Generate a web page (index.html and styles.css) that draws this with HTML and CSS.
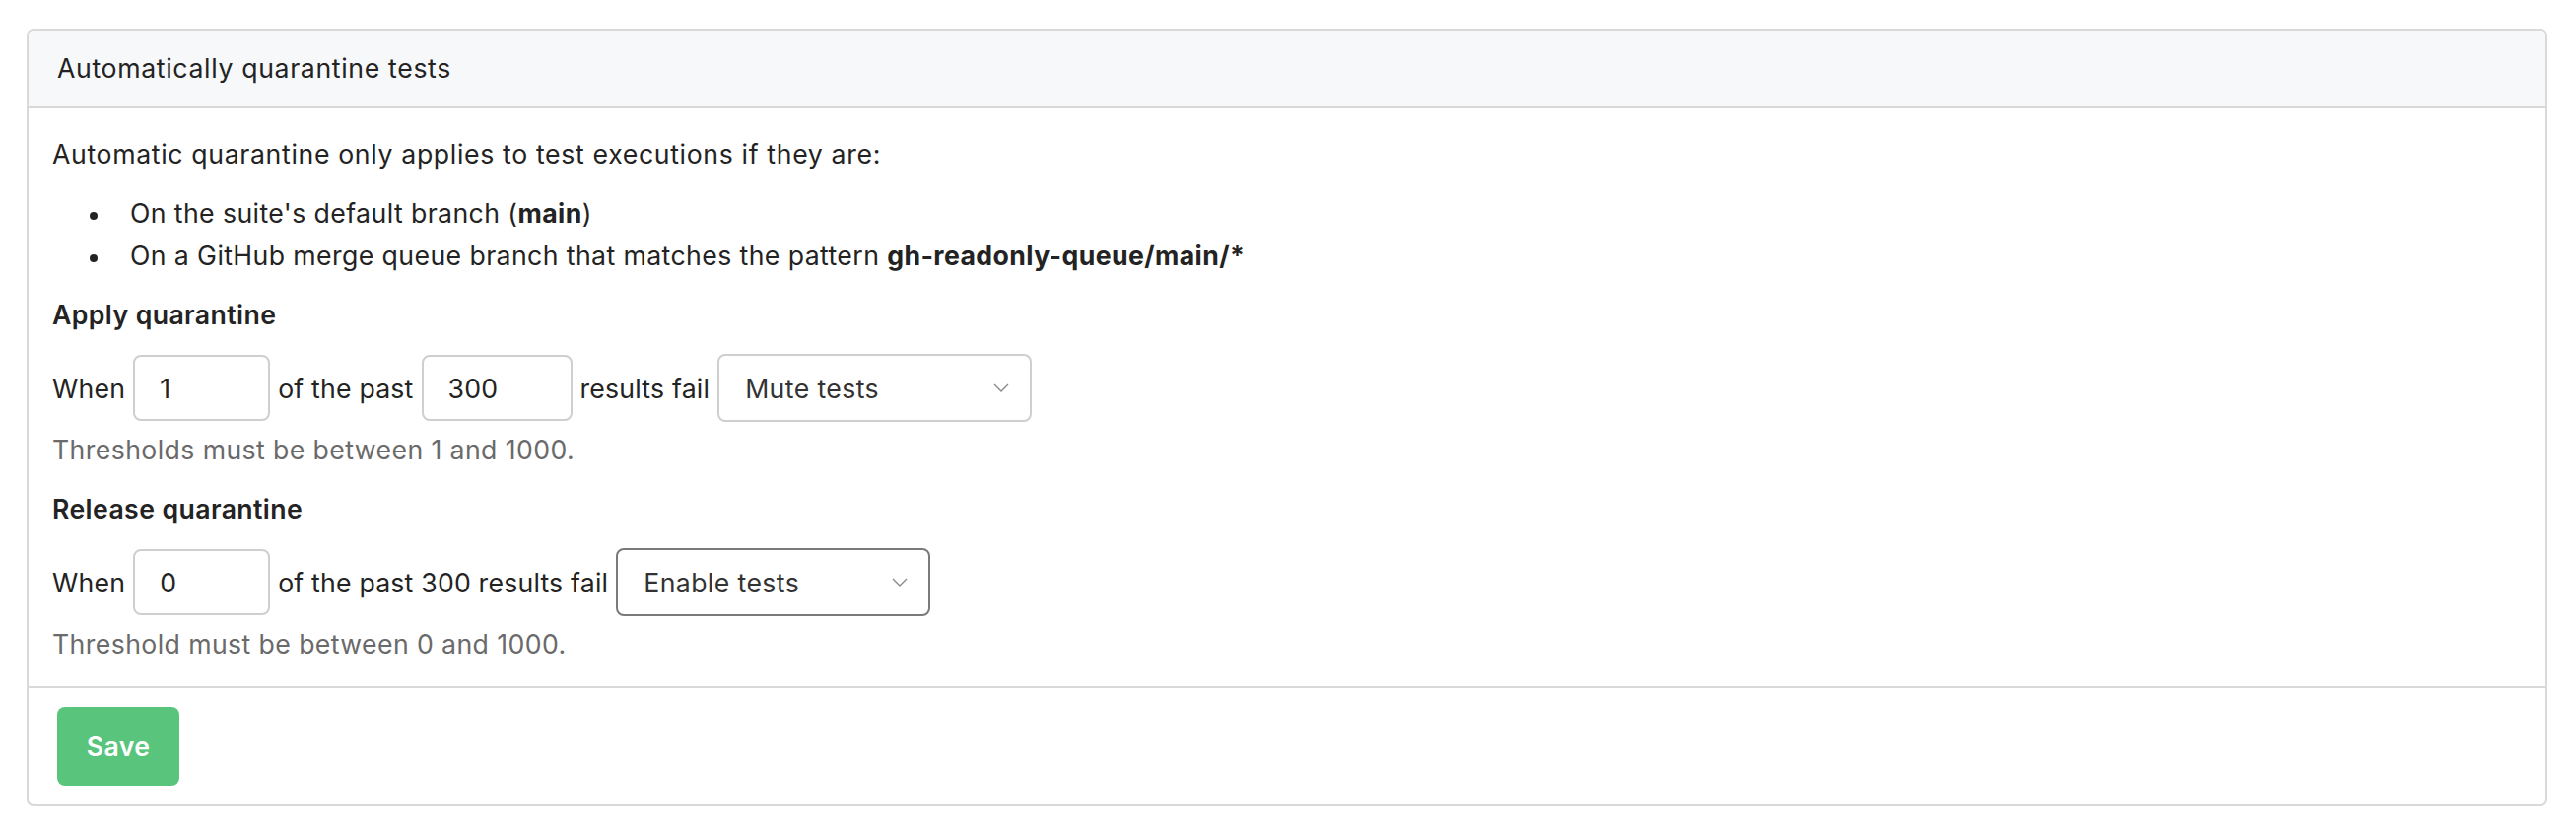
FILE: index.html
```html
<!DOCTYPE html>
<html lang="en">
<head>
<meta charset="utf-8">
<title>Automatically quarantine tests</title>
<link rel="stylesheet" href="styles.css">
</head>
<body>
<div class="card">
  <div class="card-header">Automatically quarantine tests</div>
  <div class="card-body">
    <p class="intro">Automatic quarantine only applies to test executions if they are:</p>
    <ul class="rules">
      <li>On the suite's default branch (<strong>main</strong>)</li>
      <li>On a GitHub merge queue branch that matches the pattern <strong>gh-readonly-queue/main/*</strong></li>
    </ul>
    <div class="section-title">Apply quarantine</div>
    <div class="form-row">
      <span>When</span>
      <input class="num num-sm" type="text" value="1">
      <span>of the past</span>
      <input class="num num-lg" type="text" value="300">
      <span>results fail</span>
      <div class="select">
        <span>Mute tests</span>
        <svg class="chev" width="16" height="9" viewBox="0 0 16 9"><path d="M1 1l7 7 7-7" fill="none" stroke="#8a8a8a" stroke-width="1.4"/></svg>
      </div>
    </div>
    <p class="help">Thresholds must be between 1 and 1000.</p>
    <div class="section-title">Release quarantine</div>
    <div class="form-row">
      <span>When</span>
      <input class="num num-sm" type="text" value="0">
      <span>of the past 300 results fail</span>
      <div class="select select-active">
        <span>Enable tests</span>
        <svg class="chev" width="16" height="9" viewBox="0 0 16 9"><path d="M1 1l7 7 7-7" fill="none" stroke="#8a8a8a" stroke-width="1.4"/></svg>
      </div>
    </div>
    <p class="help help-last">Threshold must be between 0 and 1000.</p>
  </div>
  <div class="card-footer">
    <button class="btn-save" type="button">Save</button>
  </div>
</div>
</body>
</html>
```

FILE: styles.css
```css
html, body {
  margin: 0;
  padding: 0;
  background: #ffffff;
}

body {
  font-family: "Inter", "Noto Sans", "Liberation Sans", sans-serif;
  font-size: 26.67px;
  line-height: 40px;
  letter-spacing: 0.4px;
  color: #232323;
}

.card {
  margin: 29px 29px 0 27px;
  border: 2px solid #d9d9d9;
  border-radius: 7px;
  background: #ffffff;
}

.card-header {
  background: #f7f8fa;
  border-bottom: 2px solid #d9d9d9;
  border-radius: 5px 5px 0 0;
  padding: 18px 29px 19px;
  font-weight: 400;
  letter-spacing: 0.65px;
}

.card-body {
  padding: 26px 24px 23px;
}

.intro {
  margin: 0 0 20px;
  letter-spacing: 0.65px;
}

.rules {
  margin: 0 0 20px;
  padding-left: 79px;
  list-style: none;
}

.rules li::before {
  content: "";
  display: inline-block;
  width: 8px;
  height: 8px;
  border-radius: 50%;
  background: #232323;
  margin-left: -41px;
  margin-right: 33px;
  vertical-align: middle;
}

.rules li + li {
  margin-top: 3px;
}

.rules strong {
  font-weight: 700;
}

.section-title {
  font-weight: 600;
  margin: 0 0 21px;
}

.form-row {
  display: flex;
  align-items: center;
  gap: 8px;
  height: 67px;
  margin-bottom: 9px;
  letter-spacing: 0.2px;
}

.num {
  box-sizing: border-box;
  height: 67px;
  border: 2px solid #cfcfcf;
  border-radius: 8px;
  padding: 0 25px;
  font: inherit;
  letter-spacing: inherit;
  color: #232323;
  background: #fff;
  outline: none;
}

.num-sm {
  width: 139px;
}

.num-lg {
  width: 153px;
}

.select {
  box-sizing: border-box;
  width: 319px;
  height: 69px;
  border: 2px solid #cfcfcf;
  border-radius: 8px;
  padding: 0 21px 0 26px;
  display: flex;
  align-items: center;
  justify-content: space-between;
  color: #333;
  letter-spacing: 0.4px;
}

.select-active {
  border-color: #7a7a7a;
}

.help {
  margin: 0 0 20px;
  color: #6a6a6a;
}

.help-last {
  margin-bottom: 0;
}

.card-footer {
  border-top: 2px solid #d9d9d9;
  padding: 19px 29px;
}

.btn-save {
  width: 124px;
  height: 80px;
  border: none;
  border-radius: 8px;
  background: #58c47c;
  color: #ffffff;
  font: inherit;
  font-weight: 600;
  letter-spacing: 0.4px;
  cursor: pointer;
}
```
